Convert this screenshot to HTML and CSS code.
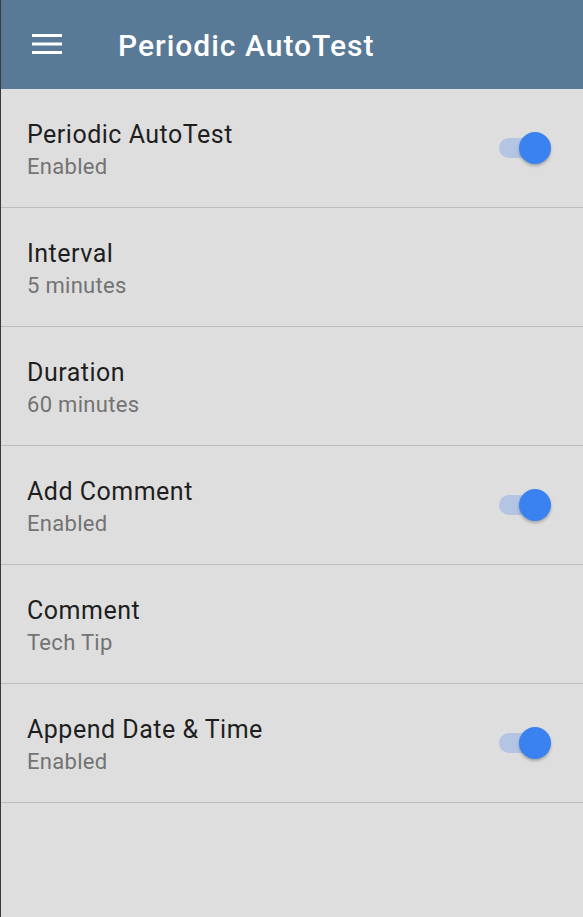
FILE: index.html
```html
<!DOCTYPE html>
<html lang="en">
<head>
  <meta charset="UTF-8">
  <title>Periodic AutoTest</title>
  <link rel="stylesheet" href="styles.css">
</head>
<body>
<div class="screen">
  <div class="toolbar">
    <svg class="menu_icon" width="30" height="22" viewBox="0 0 30 22">
      <rect x="0" y="1" width="30" height="3" fill="#fff"/>
      <rect x="0" y="9.5" width="30" height="3" fill="#fff"/>
      <rect x="0" y="18" width="30" height="3" fill="#fff"/>
    </svg>
    <h1>Periodic AutoTest</h1>
  </div>

  <div class="row">
    <div class="text">
      <div class="title">Periodic AutoTest</div>
      <div class="summary">Enabled</div>
    </div>
    <div class="switch on"><span class="thumb"></span></div>
  </div>

  <div class="row">
    <div class="text">
      <div class="title">Interval</div>
      <div class="summary">5 minutes</div>
    </div>
  </div>

  <div class="row">
    <div class="text">
      <div class="title">Duration</div>
      <div class="summary">60 minutes</div>
    </div>
  </div>

  <div class="row">
    <div class="text">
      <div class="title">Add Comment</div>
      <div class="summary">Enabled</div>
    </div>
    <div class="switch on"><span class="thumb"></span></div>
  </div>

  <div class="row">
    <div class="text">
      <div class="title">Comment</div>
      <div class="summary">Tech Tip</div>
    </div>
  </div>

  <div class="row">
    <div class="text">
      <div class="title">Append Date &amp; Time</div>
      <div class="summary">Enabled</div>
    </div>
    <div class="switch on"><span class="thumb"></span></div>
  </div>
</div>
</body>
</html>
```

FILE: styles.css
```css
* {
  box-sizing: border-box;
}

body {
  margin: 0;
  padding: 0;
  background: #dedede;
  font-family: Roboto, 'Noto Sans', sans-serif;
}

.screen {
  min-height: 917px;
  background: #dedede;
  border-left: 1px solid #3a3a3a;
}

.toolbar {
  height: 89px;
  background-color: #587a97;
  display: flex;
  align-items: center;
  padding-left: 31px;
}

.menu_icon {
  display: block;
  margin-top: -2px;
}

.toolbar h1 {
  margin: 3px 0 0 56px;
  color: #fff;
  font-size: 30px;
  line-height: 36px;
  font-weight: 500;
  letter-spacing: 1px;
}

.row {
  height: 119px;
  display: flex;
  align-items: flex-start;
  justify-content: space-between;
  padding: 30px 32px 0 26px;
  border-bottom: 1px solid #bdbdbd;
}

.text {
  display: flex;
  flex-direction: column;
}

.title {
  font-size: 25px;
  color: #1e1e1e;
  line-height: 32px;
  letter-spacing: 0.5px;
}

.summary {
  font-size: 22px;
  color: #737373;
  line-height: 32px;
  letter-spacing: 0.3px;
}

.switch {
  position: relative;
  width: 52px;
  height: 34px;
  margin-top: 11px;
}

.switch::before {
  content: "";
  position: absolute;
  left: 0;
  top: 8px;
  width: 40px;
  height: 20px;
  border-radius: 10px;
  background: #b3c5e2;
}

.switch .thumb {
  position: absolute;
  right: 0;
  top: 2px;
  width: 32px;
  height: 32px;
  border-radius: 50%;
  background: #3b82f1;
  box-shadow: 0 2px 3px rgba(0, 0, 0, 0.25);
}
```
